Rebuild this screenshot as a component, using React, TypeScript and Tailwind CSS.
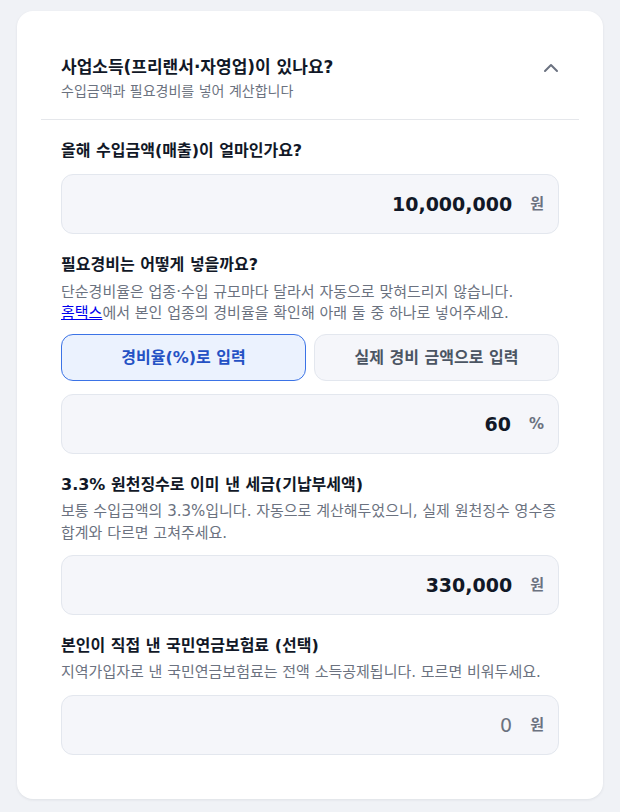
import React from "react";

const font = { fontFamily: '"DejaVu Sans", "Noto Sans CJK KR", sans-serif' };

function AmountBox({ value, unit, muted }: { value: string; unit: string; muted?: boolean }) {
  return (
    <div className="flex h-[60px] items-center justify-end gap-[18px] rounded-xl border border-[#e3e7ee] bg-[#f5f6fa] pr-[14px]">
      <span
        className={
          muted
            ? "text-[19px] font-normal text-[#6b7280]"
            : "text-[19px] font-bold text-[#111827]"
        }
      >
        {value}
      </span>
      <span className="text-[15px] font-bold text-[#6b7280]">{unit}</span>
    </div>
  );
}

export default function App() {
  return (
    <div className="min-h-[812px] bg-[#f0f2f6] px-[17px] pt-[11px] pb-3" style={font}>
      <div className="rounded-2xl bg-white p-6 shadow-[0_1px_3px_rgba(15,23,42,0.08)]">
        <div className="flex items-start justify-between border-b border-[#e5e7eb] px-5 pt-[21px] pb-[18px]">
          <div>
            <h2 className="text-[17px] font-bold leading-[22px] text-[#111827]">
              사업소득(프리랜서·자영업)이 있나요?
            </h2>
            <p className="mt-[3px] text-[14px] leading-[20px] text-[#6b7280]">
              수입금액과 필요경비를 넣어 계산합니다
            </p>
          </div>
          <svg width="16" height="16" viewBox="0 0 16 16" fill="none" className="mt-[4px]">
            <path d="M2 11L8 5L14 11" stroke="#6b7280" strokeWidth="2" strokeLinecap="round" strokeLinejoin="round" />
          </svg>
        </div>

        <div className="flex flex-col gap-5 px-5 pt-5 pb-5">
          <section>
            <h3 className="mb-3 text-[16px] font-bold leading-[22px] text-[#111827]">
              올해 수입금액(매출)이 얼마인가요?
            </h3>
            <AmountBox value="10,000,000" unit="원" />
          </section>

          <section>
            <h3 className="text-[16px] font-bold leading-[22px] text-[#111827]">
              필요경비는 어떻게 넣을까요?
            </h3>
            <p className="mt-[6px] text-[15px] leading-[21px] text-[#6b7280]">
              단순경비율은 업종·수입 규모마다 달라서 자동으로 맞혀드리지 않습니다.
              <br />
              <a href="#" className="text-[#0000ee] underline">
                홈택스
              </a>
              에서 본인 업종의 경비율을 확인해 아래 둘 중 하나로 넣어주세요.
            </p>
            <div className="mt-[10px] grid grid-cols-2 gap-2">
              <button className="h-[47px] rounded-xl border border-[#3b73e6] bg-[#ebf2fe] text-[16px] font-bold text-[#2451c4]">
                경비율(%)로 입력
              </button>
              <button className="h-[47px] rounded-xl border border-[#e3e7ee] bg-[#f5f6fa] text-[16px] font-bold text-[#4b5563]">
                실제 경비 금액으로 입력
              </button>
            </div>
            <div className="mt-[13px]">
              <AmountBox value="60" unit="%" />
            </div>
          </section>

          <section>
            <h3 className="text-[16px] font-bold leading-[22px] text-[#111827]">
              3.3% 원천징수로 이미 낸 세금(기납부세액)
            </h3>
            <p className="mt-[4px] text-[15px] leading-[22px] text-[#6b7280]">
              보통 수입금액의 3.3%입니다. 자동으로 계산해두었으니, 실제 원천징수 영수증 합계와 다르면 고쳐주세요.
            </p>
            <div className="mt-[11px]">
              <AmountBox value="330,000" unit="원" />
            </div>
          </section>

          <section>
            <h3 className="text-[16px] font-bold leading-[22px] text-[#111827]">
              본인이 직접 낸 국민연금보험료 (선택)
            </h3>
            <p className="mt-[5px] text-[15px] leading-[21px] text-[#6b7280]">
              지역가입자로 낸 국민연금보험료는 전액 소득공제됩니다. 모르면 비워두세요.
            </p>
            <div className="mt-3">
              <AmountBox value="0" unit="원" muted />
            </div>
          </section>
        </div>
      </div>
    </div>
  );
}
